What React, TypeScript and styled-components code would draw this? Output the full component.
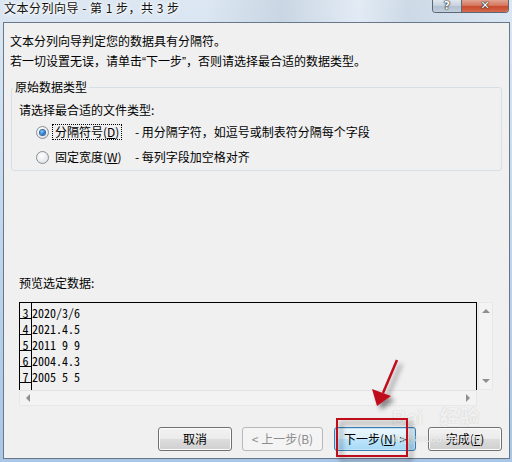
import React from "react";
import styled, { createGlobalStyle } from "styled-components";

const UI = `"Noto Sans CJK SC", "Microsoft YaHei", sans-serif`;
const MONO = `"Noto Sans Mono CJK SC", "Liberation Mono", monospace`;

const Global = createGlobalStyle`
  html, body { margin: 0; padding: 0; }
  body { width: 512px; height: 462px; overflow: hidden; background: #bcd3ea; }
  * { box-sizing: border-box; }
`;

const Window = styled.div`
  position: relative;
  width: 512px;
  height: 462px;
  display: flex;
  flex-direction: column;
  padding: 0 2px 3px 3px;
  background: linear-gradient(180deg, #dce7f2 0%, #d2e1f0 20%, #bcd3ea 60%, #a9c6e6 100%);
  font-family: ${UI};
  font-size: 12px;
  color: #000;
`;

const TitleBar = styled.div`
  height: 22px;
  display: flex;
  align-items: flex-start;
  flex-shrink: 0;
  background: linear-gradient(90deg, rgba(255,255,255,0) 0%, rgba(255,255,255,0) 40%, rgba(150,165,185,0.25) 55%, rgba(255,255,255,0.2) 70%, rgba(150,165,185,0.2) 80%, rgba(255,255,255,0) 100%);
`;

const Title = styled.div`
  padding-left: 1px;
  line-height: 16px;
  font-size: 12px;
  letter-spacing: 0.5px;
  color: #111;
  text-shadow: 0 0 6px #fff, 0 0 4px #fff, 0 0 2px #fff;
  white-space: pre;
`;

const Captions = styled.div`
  margin-left: auto;
  margin-right: 1px;
  display: flex;
  height: 13px;
  border: 1px solid #5b6776;
  border-top: none;
  border-radius: 0 0 4px 4px;
  overflow: hidden;
`;

const CapBtn = styled.div<{ $close?: boolean }>`
  width: ${(p) => (p.$close ? 47 : 28)}px;
  height: 100%;
  display: flex;
  align-items: center;
  justify-content: center;
  font-family: "DejaVu Sans", sans-serif;
  font-weight: bold;
  font-size: 11px;
  line-height: 12px;
  color: #fff;
  text-shadow: 0 0 1px #222, 0 0 1px #222, 0 0 2px #333;
  background: ${(p) =>
    p.$close
      ? "linear-gradient(180deg, #e0a492 0%, #d6775f 45%, #c74a2e 55%, #d66a4d 100%)"
      : "linear-gradient(180deg, #dfe6ee 0%, #c9d4e0 45%, #b3c1d1 55%, #c2cfdc 100%)"};
  border-left: ${(p) => (p.$close ? "1px solid #5b6776" : "none")};
`;

const Client = styled.div`
  flex: 1;
  display: flex;
  flex-direction: column;
  border: 1px solid #68778a;
  background: #f0f0f0;
  padding: 8px 6px 0 6px;
`;

const Line = styled.div`
  line-height: 20px;
  white-space: pre;
`;

const Quote = styled.span`
  font-family: "Liberation Sans", sans-serif;
`;

const Group = styled.fieldset`
  margin: 8px 1px 0 1px;
  padding: 0 7px 3px 7px;
  border: 1px solid #d5dfe5;
  border-radius: 3px;
  min-width: 0;
`;

const Legend = styled.legend`
  margin-left: -6px;
  padding: 0 2px;
  line-height: 14px;
`;

const Prompt = styled.div`
  line-height: 20px;
  margin-top: 6px;
`;

const RadioRow = styled.div<{ $first?: boolean }>`
  display: grid;
  grid-template-columns: 13px 86px 1fr;
  align-items: center;
  height: 20px;
  margin-left: 17px;
  margin-top: ${(p) => (p.$first ? 2 : 5)}px;
`;

const Radio = styled.span<{ $checked?: boolean }>`
  width: 13px;
  height: 13px;
  border-radius: 50%;
  border: 1px solid #8a8e93;
  background: radial-gradient(circle at 40% 35%, #ffffff 0%, #eef0f2 45%, #d3d6da 100%);
  display: flex;
  align-items: center;
  justify-content: center;
  &::after {
    content: "";
    display: ${(p) => (p.$checked ? "block" : "none")};
    width: 5px;
    height: 5px;
    border-radius: 50%;
    background: radial-gradient(circle at 40% 35%, #8fd2ff 0%, #2a7ed6 50%, #0b3f8a 100%);
    box-shadow: 0 0 0 1px #35689f;
  }
`;

const OptLabel = styled.span<{ $focus?: boolean }>`
  justify-self: start;
  margin-left: 3px;
  padding: 0 2px;
  line-height: 14px;
  border: 1px dotted ${(p) => (p.$focus ? "#000" : "transparent")};
`;

const Desc = styled.span`
  white-space: pre;
  line-height: 20px;
`;

const U = styled.span`
  text-decoration: underline;
  text-underline-offset: 1px;
`;

const PreviewLabel = styled.div`
  margin: 102px 0 0 9px;
  line-height: 20px;
`;

const PreviewFrame = styled.div`
  margin: 9px 0 0 9px;
  width: 474px;
  display: grid;
  grid-template-columns: 458px 16px;
  grid-template-rows: 88px 16px;
`;

const DataArea = styled.div`
  border: 1px solid #000;
  border-bottom: none;
  overflow: hidden;
  display: flex;
  flex-direction: column;
  font-family: ${MONO};
  font-size: 12px;
`;

const DataRow = styled.div`
  display: flex;
  height: 16px;
  flex-shrink: 0;
`;

const RowNum = styled.div`
  width: 12px;
  height: 16px;
  border-right: 1px solid #000;
  border-bottom: 1px solid #000;
  text-align: center;
  line-height: 15px;
  padding-top: 2px;
`;

const RowText = styled.div`
  line-height: 16px;
  padding-top: 2px;
  white-space: pre;
`;

const VScroll = styled.div`
  margin-left: 1px;
  background: #f3f3f3;
  border: 1px solid #e8e8e8;
  display: flex;
  flex-direction: column;
  justify-content: space-between;
  align-items: center;
  padding: 6px 0 6px 0;
`;

const HScroll = styled.div`
  background: #f3f3f3;
  border: 1px solid #e8e8e8;
  border-top: 1px solid #e2e2e2;
  display: flex;
  justify-content: space-between;
  align-items: center;
  padding: 0 6px 0 6px;
`;

const Arrow = styled.span<{ $dir: "up" | "down" | "left" | "right" }>`
  width: 0;
  height: 0;
  border-style: solid;
  border-color: transparent;
  ${(p) =>
    p.$dir === "up"
      ? "border-width: 0 4px 4px 4px; border-bottom-color: #8f8f8f;"
      : p.$dir === "down"
      ? "border-width: 4px 4px 0 4px; border-top-color: #8f8f8f;"
      : p.$dir === "left"
      ? "border-width: 4px 4px 4px 0; border-right-color: #8f8f8f;"
      : "border-width: 4px 0 4px 4px; border-left-color: #8f8f8f;"}
`;

const ButtonRow = styled.div`
  display: flex;
  justify-content: flex-end;
  margin: 21px 1px 0 0;
`;

const Button = styled.div<{ $w: number; $gap: number; $disabled?: boolean; $default?: boolean }>`
  width: ${(p) => p.$w}px;
  height: 24px;
  margin-left: ${(p) => p.$gap}px;
  border-radius: 3px;
  display: flex;
  align-items: center;
  justify-content: center;
  line-height: 20px;
  white-space: pre;
  color: ${(p) => (p.$disabled ? "#8d8d8d" : "#000")};
  border: 1px solid ${(p) => (p.$disabled ? "#b5b9bc" : p.$default ? "#3c7fb1" : "#707070")};
  background: ${(p) =>
    p.$disabled
      ? "#f4f4f4"
      : p.$default
      ? "linear-gradient(180deg, #eaf6fd 0%, #d9f0fc 50%, #bee6fd 50%, #a7d9f5 100%)"
      : "linear-gradient(180deg, #f2f2f2 0%, #ebebeb 50%, #dddddd 50%, #cfcfcf 100%)"};
  box-shadow: inset 0 0 0 1px ${(p) => (p.$disabled ? "#f4f4f4" : p.$default ? "#bfe4f9" : "#fcfcfc")};
`;

const Overlay = styled.svg`
  position: absolute;
  left: 0;
  top: 0;
  pointer-events: none;
`;

const Watermark = styled.div`
  position: absolute;
  left: 392px;
  top: 406px;
  font-family: "Liberation Sans", ${UI};
  color: rgba(255, 255, 255, 0.8);
  text-shadow: 0 0 1px rgba(120, 120, 120, 0.45);
  pointer-events: none;
`;

const WmBig = styled.div`
  font-size: 20px;
  font-weight: bold;
  line-height: 24px;
  white-space: pre;
`;

const WmSmall = styled.div`
  font-size: 11px;
  line-height: 12px;
  margin-top: 2px;
  white-space: pre;
`;

const rows = [
  ["3", "2020/3/6"],
  ["4", "2021.4.5"],
  ["5", "2011 9 9"],
  ["6", "2004.4.3"],
  ["7", "2005 5 5"],
];

export default function App() {
  return (
    <>
      <Global />
      <Window>
        <TitleBar>
          <Title>文本分列向导 - 第 1 步，共 3 步</Title>
          <Captions>
            <CapBtn>?</CapBtn>
            <CapBtn $close>✕</CapBtn>
          </Captions>
        </TitleBar>
        <Client>
          <Line>文本分列向导判定您的数据具有分隔符。</Line>
          <Line>
            若一切设置无误，请单击<Quote>“</Quote>下一步<Quote>”</Quote>，否则请选择最合适的数据类型。
          </Line>
          <Group>
            <Legend>原始数据类型</Legend>
            <Prompt>请选择最合适的文件类型:</Prompt>
            <RadioRow $first>
              <Radio $checked />
              <OptLabel $focus>
                分隔符号(<U>D</U>)
              </OptLabel>
              <Desc>- 用分隔字符，如逗号或制表符分隔每个字段</Desc>
            </RadioRow>
            <RadioRow>
              <Radio />
              <OptLabel>
                固定宽度(<U>W</U>)
              </OptLabel>
              <Desc>- 每列字段加空格对齐</Desc>
            </RadioRow>
          </Group>
          <PreviewLabel>预览选定数据:</PreviewLabel>
          <PreviewFrame>
            <DataArea>
              {rows.map(([n, t]) => (
                <DataRow key={n}>
                  <RowNum>{n}</RowNum>
                  <RowText>{t}</RowText>
                </DataRow>
              ))}
              <DataRow>
                <RowNum />
              </DataRow>
            </DataArea>
            <VScroll>
              <Arrow $dir="up" />
              <Arrow $dir="down" />
            </VScroll>
            <HScroll>
              <Arrow $dir="left" />
              <Arrow $dir="right" />
            </HScroll>
            <div />
          </PreviewFrame>
          <ButtonRow>
            <Button $w={74} $gap={0}>取消</Button>
            <Button $w={81} $gap={10} $disabled>
              &lt; 上一步(B)
            </Button>
            <Button $w={82} $gap={11} $default>
              下一步(<U>N</U>) &gt;
            </Button>
            <Button $w={74} $gap={12}>
              完成(<U>F</U>)
            </Button>
          </ButtonRow>
        </Client>
        <Watermark>
          <WmBig>Bai   经验</WmBig>
          <WmSmall>jingyan.baidu.com</WmSmall>
        </Watermark>
        <Overlay width="512" height="462" viewBox="0 0 512 462">
          <defs>
            <filter id="sh" x="-50%" y="-50%" width="200%" height="200%">
              <feGaussianBlur in="SourceAlpha" stdDeviation="2.5" />
              <feOffset dx="4" dy="4" result="b" />
              <feComponentTransfer>
                <feFuncA type="linear" slope="0.45" />
              </feComponentTransfer>
              <feMerge>
                <feMergeNode />
                <feMergeNode in="SourceGraphic" />
              </feMerge>
            </filter>
          </defs>
          <g filter="url(#sh)">
            <rect x="337" y="419" width="70" height="37" fill="none" stroke="#c0101c" strokeWidth="2" />
            <line x1="397" y1="360" x2="383" y2="393" stroke="#c0101c" strokeWidth="2.5" />
            <polygon points="377,406 372,389 391,396" fill="#c0101c" />
          </g>
        </Overlay>
      </Window>
    </>
  );
}
